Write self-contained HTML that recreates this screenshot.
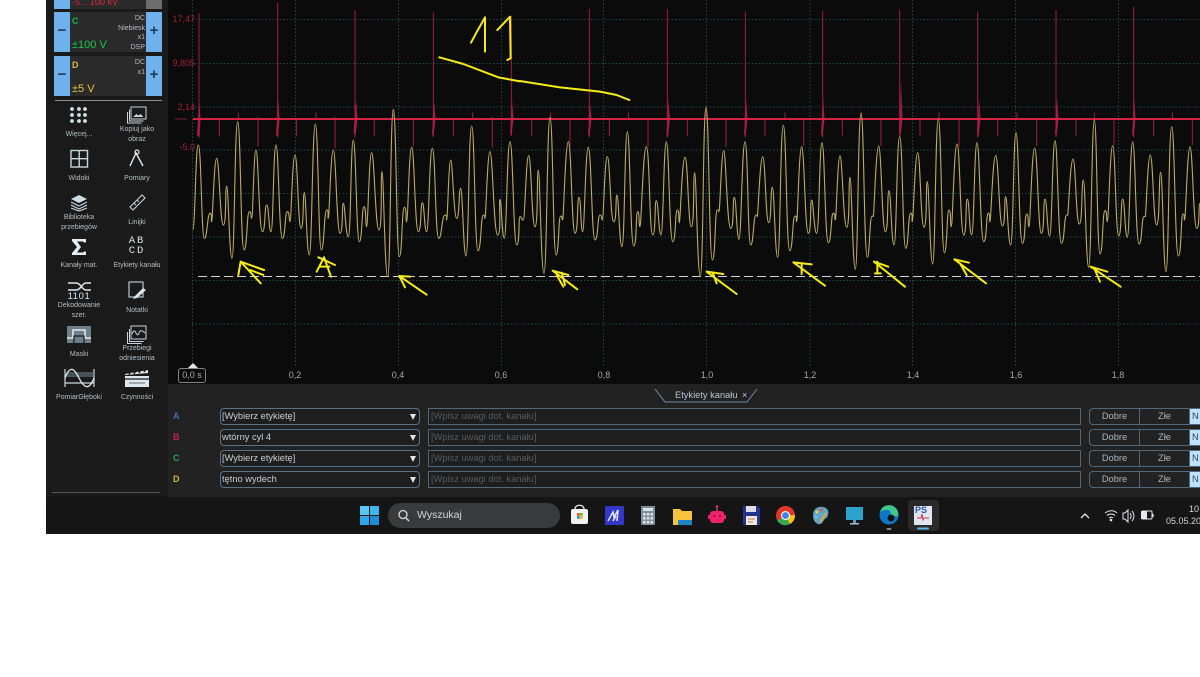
<!DOCTYPE html>
<html lang="pl"><head><meta charset="utf-8"><title>Oscyloskop</title>
<style>
html,body{margin:0;padding:0;background:#fff}
body{width:1200px;height:677px;overflow:hidden;position:relative;font-family:"Liberation Sans",sans-serif;filter:blur(.35px)}
div,span{position:absolute;box-sizing:border-box}
.app{left:46px;top:0;width:1154px;height:534px;overflow:hidden;background:#1a1a1a}
.lb{color:#b4bfc6;font-size:7px;line-height:9.5px;text-align:center;width:60px;white-space:nowrap}
.ax{color:#a9a9a9;font-size:9px;top:370px;width:30px;text-align:center}
.rl{color:#a81c3c;font-size:9px;text-align:right;width:30px;left:165px}
.ch{font-size:9px;font-weight:bold;left:173px}
.sel{left:220px;width:200px;height:17px;border:1px solid #58728a;border-radius:4px;background:#1e1e1e;color:#c9ced2;font-size:9.3px;line-height:15px;padding-left:1px}
.sel i{position:absolute;right:3px;top:5px;border-left:3.5px solid transparent;border-right:3.5px solid transparent;border-top:6px solid #dfe8ee}
.inp{left:428px;width:653px;height:17px;border:1px solid #4f687d;background:#1e1e1e;color:#565a5e;font-size:9.3px;line-height:15px;padding-left:2px}
.grp{left:1089px;width:120px;height:17px;border:1px solid #4f687d;border-radius:4px;background:#222;color:#aab6bf;font-size:9.3px;line-height:15px;overflow:hidden}
.grp span{top:0;height:15px;text-align:center}
.card{background:#2a2a2a;left:54px;width:108px;height:40px;border-radius:3px}
.pm{background:#6fb1ec;top:0;height:40px;width:16px;color:#1e3a56;font-size:15px;font-weight:bold;text-align:center;line-height:38px}
.meta{color:#b8bcc0;font-size:7px;line-height:9.5px;text-align:right;right:17px;top:2px;width:40px}
</style></head><body>
<div class="app"></div>
<div style="left:168px;top:0;width:1032px;height:387px;background:#0b0b0c"></div>
<div style="left:168px;top:384px;width:1032px;height:113px;background:#222"></div>
<div style="left:46px;top:497px;width:1154px;height:37px;background:#151515"></div>

<!-- channel cards -->
<div class="card" style="top:-31px"><div class="pm" style="left:0;background:#6fb1ec"></div><div class="pm" style="right:0;background:#6d6d6d"></div><span style="left:18px;top:28px;color:#e0263c;font-size:9px;white-space:nowrap">-5 .. 100 kV</span></div>
<div class="card" style="top:12px"><div class="pm" style="left:0">−</div><div class="pm" style="right:0">+</div>
<span style="left:18px;top:4px;color:#19b84a;font-size:9px;font-weight:bold">C</span><span style="left:18px;top:27px;color:#18c752;font-size:11px;white-space:nowrap">±100 V</span><div class="meta">DC<br>Niebiesk<br>x1<br>DSP</div></div>
<div class="card" style="top:56px"><div class="pm" style="left:0">−</div><div class="pm" style="right:0">+</div>
<span style="left:18px;top:4px;color:#e0b83c;font-size:9px;font-weight:bold">D</span><span style="left:18px;top:27px;color:#e8c640;font-size:11px;white-space:nowrap">±5 V</span><div class="meta">DC<br>x1</div></div>
<div style="left:55px;top:100px;width:107px;height:1px;background:#8d8d8d"></div>
<div style="left:52px;top:492px;width:108px;height:1px;background:#555"></div>

<!-- sidebar labels -->
<div class="lb" style="left:49px;top:130px">Więcej...</div>
<div class="lb" style="left:107px;top:125px">Kopiuj jako<br>obraz</div>
<div class="lb" style="left:49px;top:174px">Widoki</div>
<div class="lb" style="left:107px;top:174px">Pomiary</div>
<div class="lb" style="left:49px;top:213px">Biblioteka<br>przebiegów</div>
<div class="lb" style="left:107px;top:218px">Linijki</div>
<div class="lb" style="left:49px;top:261px">Kanały mat.</div>
<div class="lb" style="left:107px;top:261px">Etykiety kanału</div>
<div class="lb" style="left:49px;top:301px">Dekodowanie<br>szer.</div>
<div class="lb" style="left:107px;top:306px">Notatki</div>
<div class="lb" style="left:49px;top:350px">Maski</div>
<div class="lb" style="left:107px;top:344px">Przebiegi<br>odniesienia</div>
<div class="lb" style="left:49px;top:393px">PomiarGłęboki</div>
<div class="lb" style="left:107px;top:393px">Czynności</div>

<!-- sidebar icons -->
<svg style="position:absolute;left:46px;top:100px" width="122" height="295" viewBox="46 100 122 295" fill="none">
<g fill="#cfe0ea"><circle cx="72" cy="109" r="1.9"/><circle cx="79" cy="109" r="1.9"/><circle cx="85" cy="109" r="1.9"/><circle cx="72" cy="115" r="1.9"/><circle cx="79" cy="115" r="1.9"/><circle cx="85" cy="115" r="1.9"/><circle cx="72" cy="121" r="1.9"/><circle cx="79" cy="121" r="1.9"/><circle cx="85" cy="121" r="1.9"/></g>
<g stroke="#c6d6e0" stroke-width="1"><rect x="131" y="107" width="15" height="12"/><path d="M129.500 109.500v11.500h14M127.500 112v11h14"/></g>
<path d="M133 117l3.500-3 2 1.500 2-1.500 3 3z" fill="#c6d6e0"/>
<rect x="71" y="150.500" width="16.500" height="16.500" stroke="#c6d6e0" stroke-width="1.4"/><path d="M79.200 150v17M71 158.700h17" stroke="#c6d6e0" stroke-width="1.4"/>
<path d="M130 166l6-13 7 13" stroke="#dfe8ee" stroke-width="1.4"/><circle cx="137" cy="152" r="2" stroke="#dfe8ee" stroke-width="1.200"/>
<path d="M71 199l8-4 8 4-8 4z" fill="#cfdde6"/><path d="M71 202l8 4 8-4M71 205l8 4 8-4M71 208l8 3 8-3" stroke="#c6d6e0" stroke-width="1.200"/>
<path d="M130 207l12-12 3 3-12 12z" stroke="#c6d6e0" stroke-width="1.100"/><path d="M134 203l2 2M137 200l2 2" stroke="#c6d6e0"/>
<path d="M72 239h14v3.500h-2l-1-1h-6l4 5.500-4 5.500h6l1-1h2v3.500H72v-2l5-6-5-6z" fill="#e2ecf2"/>
<path d="M68 283h8c5 0 6 7 10 7h5M68 290h8c5 0 6-7 10-7h5" stroke="#dbe6ed" stroke-width="1.500"/>
<rect x="129" y="282" width="14" height="15" stroke="#c6d6e0" stroke-width="1.100"/><path d="M134 297l9-9 3 2-9 8-4 1z" fill="#dbe6ed"/>
<rect x="67" y="326" width="24" height="17" fill="#6f7f89"/><path d="M67 338h6v-8h12v8h6" stroke="#e0e8ee" stroke-width="1.600"/><path d="M74 343v-7h10v7" stroke="#1a1a1a" stroke-width="1.200"/>
<g stroke="#c6d6e0" stroke-width="1"><rect x="131" y="326" width="15" height="13"/><path d="M129.500 329v12.500h14M127.500 332v11.500h14"/><path d="M132 334c2-5 3-3 4-1s2 3 3 0 3-3 6 0"/></g>
<path d="M65 369v18M94 369v18M65 383h29" stroke="#c6d6e0" stroke-width="1.200"/><path d="M66 372h27v5H66z" fill="#6f7f89" opacity=".55"/><path d="M65 378c5-13 9-10 14 0s10 13 15 0" stroke="#e3edf3" stroke-width="1.300"/>
<rect x="125" y="376" width="24" height="11" fill="#dfe8ee"/><path d="M125 374l23-4v3l-23 2zM125 371l23-1.500" fill="#dfe8ee"/><path d="M129 374.500l2-4M134 374l2-4M139 373l2-4M144 372l2-3" stroke="#1a1a1a" stroke-width="1.500"/><path d="M125 379h24" stroke="#1a1a1a" stroke-width="1.200"/><path d="M129 383h16" stroke="#6f7f89" stroke-width="1.200"/>
</svg>
<span style="left:66px;top:291px;color:#dbe6ed;font-size:9.500px;width:26px;text-align:center;letter-spacing:.6px">1101</span>
<span style="left:127px;top:237px;color:#d8e3ea;font-size:10.5px;line-height:9.500px;font-family:'Liberation Mono',monospace;letter-spacing:2px;width:20px;text-align:center;white-space:normal">AB<br>CD</span>

<!-- scope -->
<svg style="position:absolute;left:0;top:0" width="1200" height="384" viewBox="0 0 1200 384" fill="none">
<g stroke="#1e4a4a" stroke-width="1" stroke-dasharray="1.500 2">
<path d="M192 19.500H1200M192 63.500H1200M192 107H1200M192 150H1200M192 193.500H1200M192 237H1200M192 280.500H1200M192 324H1200"/>
<path d="M192.500 0V366M295.500 0V366M398.500 0V366M501.500 0V366M603.500 0V366M706.500 0V366M810 0V366M912.500 0V366M1015.500 0V366M1118.500 0V366"/>
</g>
<path d="M198 276.500H1200" stroke="#d2d2d2" stroke-width="1" stroke-dasharray="9 4"/>
<path d="M175 119h12" stroke="#7c1c30" stroke-width="1"/>

<!-- red spikes -->
<g stroke="#a01c40" stroke-width="3" transform="translate(170,0) scale(.33333)">
<path d="M87 40V412M323 8V412M555 30V412M790 38V412M1024 48V408"/>
<path d="M148 355V410M205 337V355M264 350V440M380 355V408M438 337V355M495 350V445M613 355V408M670 328V355M730 355V440M850 355V410M908 337V355M967 350V443"/>
</g>
<g stroke="#a01c40" stroke-width="3" transform="translate(520,0) scale(.33333)">
<path d="M208 27V412M442 27V412M676 35V412M908 32V412"/>
<path d="M35 355V408M92 337V355M150 355V440M268 355V408M325 337V355M384 355V440M502 355V408M558 322V355M618 355V442M735 355V410M795 337V355M851 355V438M967 355V406M1025 337V355"/>
</g>
<g stroke="#a01c40" stroke-width="3" transform="translate(860,0) scale(.33333)">
<path d="M119 30V410M353 35V412M588 30V412M821 20V412"/>
<path d="M63 355V438M180 355V408M237 337V355M297 355V440M413 355V408M471 337V355M530 355V438M648 355V408M703 337V355M762 355V435M881 355V408M937 337V355M997 355V435"/>
</g>
<g fill="#a51d42">
<path d="M199 95l1.500 24-1 19-2.500-3 1-16zM278 95l1.500 24-1.500 19-2-3 1-16zM279 95zM278 95zM278 95zM356 100l1.500 19-2 17-2-3 1-14zM434 100l1.500 19-2 18-1.500-3 1-15zM512 100l1.500 19-2 17-1.500-3 1-14zM590 103l1.500 16-2 18-1.500-3 1-15zM668 98l2 21-2 18-1.500-3 1-15zM746 98l1.500 21-2 18-1.500-3 1-15zM823 95l1.500 24-2 18-1.500-3 1-15zM901 80l1.500 39-2 17-1.500-3 1-14zM979 98l1.500 21-2 18-1.500-3 1-15zM1057 98l1.500 21-2 18-1.500-3 1-15zM1134 95l1.500 24-2 18-1.500-3 1-15z"/>
</g>
<path d="M193 119H1200" stroke="#d62249" stroke-width="2"/>

<!-- yellow trace -->
<g stroke="#bdab66" stroke-width="3.300" stroke-linejoin="round" fill="none">
<path transform="translate(170,0) scale(.33333)" d="M68 690C76 690 76 435 85 435S94 715 103 715S112 640 120 640S122 665 125 665S132 475 140 475S150 675 160 675S165 558 170 558S178 775 186 775S194 365 203 365S212 750 222 750S230 635 238 635S241 655 245 655S251 450 258 450S267 695 277 695S283 615 290 615S296 695 303 695S310 435 318 435S327 715 337 715S344 635 352 635S356 665 360 665S367 465 375 465S384 685 393 685S398 578 403 578S410 765 418 765S427 372 436 372S445 750 454 750S462 630 470 630S472 655 475 655S482 450 490 450S500 700 510 700S515 610 520 610S527 710 535 710S542 420 550 420S559 725 568 725S575 620 582 620S586 680 590 680S597 458 605 458S616 690 627 690S631 515 636 515S644 830 653 830S661 328 670 328S679 770 688 770S695 622 703 622S706 665 710 665S717 442 725 442S735 695 745 695S751 608 757 608S763 695 770 695S778 445 787 445S796 715 806 715S815 645 825 645S827 660 830 660S836 480 842 480S851 655 860 655S866 565 872 565S880 768 888 768S896 378 905 378S914 752 924 752S932 645 940 645S942 655 945 655S952 455 960 455S971 705 983 705S986 598 990 598S996 715 1003 715S1011 425 1020 425S1030 735 1040 735S1045 650 1050 650"/>
<path transform="translate(520,0) scale(.33333)" d="M0 650C5 650 5 660 10 660S18 467 26 467S35 680 45 680S50 510 55 510S63 820 72 820S81 352 90 352S99 765 108 765S115 648 122 648S125 660 128 660S136 425 145 425S155 700 165 700S171 592 177 592S182 695 188 695S196 442 205 442S215 720 225 720S232 645 240 645S243 660 247 660S254 470 262 470S271 665 281 665S286 585 291 585S298 740 306 740S314 395 322 395S331 738 341 738S347 635 353 635S356 680 360 680S369 440 379 440S388 705 398 705S403 602 409 602S416 705 423 705S431 425 439 425S448 725 458 725S465 630 472 630S475 668 478 668S486 472 495 472S504 680 514 680S519 518 524 518S532 830 541 830S549 322 558 322S567 780 577 780S584 630 592 630S594 635 597 635S604 452 611 452S621 685 632 685S637 592 643 592S650 718 657 718S666 425 675 425S683 735 692 735S700 645 708 645S710 650 712 650S720 470 728 470S737 668 746 668S751 562 757 562S765 772 773 772S781 375 790 375S799 752 809 752S817 648 825 648S827 665 830 665S837 440 845 440S855 700 865 700S870 600 875 600S882 700 890 700S898 428 906 428S915 728 925 728S932 640 940 640S943 660 946 660S953 467 960 467S970 682 980 682S985 532 990 532S998 808 1006 808S1014 340 1023 340S1032 772 1042 772"/>
<path transform="translate(860,0) scale(.33333)" d="M22 772C29 772 29 648 36 648S38 650 40 650S48 438 56 438S66 695 76 695S81 572 87 572S94 735 102 735S110 410 119 410S128 745 137 745S144 640 152 640S154 665 157 665S165 458 173 458S182 682 192 682S197 545 202 545S210 792 218 792S226 358 235 358S244 758 253 758S260 630 267 630S270 680 274 680S282 432 291 432S301 705 311 705S316 597 322 597S328 705 335 705S343 428 351 428S361 725 371 725S378 640 385 640S387 665 390 665S398 467 407 467S417 678 427 678S432 590 437 590S444 735 452 735S460 398 468 398S477 730 487 730S493 642 500 642S503 680 507 680S515 445 524 445S534 700 544 700S549 597 555 597S562 708 569 708S577 422 585 422S594 730 604 730S612 645 620 645S621 645 623 645S631 477 639 477S648 672 658 672S664 540 670 540S678 802 686 802S695 360 703 360S711 762 720 762S727 632 735 632S738 665 742 665S750 437 758 437S767 708 776 708S782 597 788 597S795 712 802 712S810 425 818 425S827 732 837 732S844 650 852 650S854 650 856 650S863 465 871 465S880 675 890 675S896 517 902 517S910 815 918 815S926 380 935 380S945 768 955 768S962 642 969 642S971 660 974 660S982 440 990 440S1000 685 1010 685S1015 610 1020 610"/>
</g>

<!-- yellow annotations -->
<g stroke="#f4ec14" stroke-width="6" stroke-linecap="round" stroke-linejoin="round" fill="none" transform="translate(170,0) scale(.33333)">
<path d="M903 128L918 100 945 52 945 155M982 90L1020 50 1022 175 1012 180"/>
<path d="M808 172L880 192 985 232 1050 244"/>
<path d="M212 785L272 850M212 785L205 825M212 785L282 810M240 810L280 825"/>
<path d="M445 772L495 795M462 772L440 815M462 772L483 830M450 800L478 800"/>
<path d="M688 828L770 884M688 828L720 830M688 828L705 862"/>
</g>
<g stroke="#f4ec14" stroke-width="6" stroke-linecap="round" stroke-linejoin="round" fill="none" transform="translate(520,0) scale(.33333)">
<path d="M0 243L120 262 240 275 290 285 328 300"/>
<path d="M98 812L172 868M98 812L145 825M110 825L130 860M125 818L135 855"/>
<path d="M560 815L650 882M560 815L610 822M578 818L590 850"/>
<path d="M820 787L915 857M820 787L875 793M845 793L845 822"/>
</g>
<g stroke="#f4ec14" stroke-width="6" stroke-linecap="round" stroke-linejoin="round" fill="none" transform="translate(860,0) scale(.33333)">
<path d="M42 785L135 860M42 785L85 800M52 785L52 820M45 820L62 820"/>
<path d="M283 778L378 850M283 778L327 788M300 790L320 825"/>
<path d="M692 800L782 860M692 800L742 815M705 810L720 845"/>
</g>
</svg>

<div class="rl" style="top:14px">17,47</div>
<div class="rl" style="top:58px">9,805</div>
<div class="rl" style="top:102px">2,14</div>
<div class="rl" style="top:142px">-5,0</div>

<!-- axis -->
<div style="left:178px;top:368px;width:28px;height:15px;border:1px solid #7d8790;border-radius:3px;color:#a9a9a9;font-size:9px;line-height:13px;text-align:center">0,0 s</div>
<div style="left:188px;top:363px;width:0;height:0;border-left:5px solid transparent;border-right:5px solid transparent;border-bottom:5px solid #dfe8ee"></div>
<div class="ax" style="left:280px">0,2</div><div class="ax" style="left:383px">0,4</div><div class="ax" style="left:486px">0,6</div><div class="ax" style="left:589px">0,8</div><div class="ax" style="left:692px">1,0</div><div class="ax" style="left:795px">1,2</div><div class="ax" style="left:898px">1,4</div><div class="ax" style="left:1001px">1,6</div><div class="ax" style="left:1103px">1,8</div>

<!-- tab -->
<svg style="position:absolute;left:640px;top:384px" width="130" height="22" fill="none"><path d="M15 5l10 13h82l10-13" stroke="#6f8ba5"/></svg>
<span style="left:675px;top:390px;color:#b8c4cc;font-size:9.3px;white-space:nowrap">Etykiety kanału</span><span style="left:742px;top:390px;color:#c8d0d6;font-size:9px">×</span>

<!-- rows -->
<span class="ch" style="top:411px;color:#3f6fb0">A</span>
<span class="ch" style="top:432px;color:#c9234a">B</span>
<span class="ch" style="top:453px;color:#1ba84a">C</span>
<span class="ch" style="top:474px;color:#d8b23c">D</span>
<div class="sel" style="top:408px">[Wybierz etykietę]<i></i></div>
<div class="sel" style="top:429px">wtórny cyl 4<i></i></div>
<div class="sel" style="top:450px">[Wybierz etykietę]<i></i></div>
<div class="sel" style="top:471px">tętno wydech<i></i></div>
<div class="inp" style="top:408px">[Wpisz uwagi dot. kanału]</div>
<div class="inp" style="top:429px">[Wpisz uwagi dot. kanału]</div>
<div class="inp" style="top:450px">[Wpisz uwagi dot. kanału]</div>
<div class="inp" style="top:471px">[Wpisz uwagi dot. kanału]</div>
<div class="grp" style="top:408px"><span style="left:0;width:50px;border-right:1px solid #4f687d">Dobre</span><span style="left:50px;width:50px;border-right:1px solid #4f687d">Złe</span><span style="left:100px;width:20px;background:#bfe2fb;color:#33485a;text-align:left;padding-left:2px">N</span></div>
<div class="grp" style="top:429px"><span style="left:0;width:50px;border-right:1px solid #4f687d">Dobre</span><span style="left:50px;width:50px;border-right:1px solid #4f687d">Złe</span><span style="left:100px;width:20px;background:#bfe2fb;color:#33485a;text-align:left;padding-left:2px">N</span></div>
<div class="grp" style="top:450px"><span style="left:0;width:50px;border-right:1px solid #4f687d">Dobre</span><span style="left:50px;width:50px;border-right:1px solid #4f687d">Złe</span><span style="left:100px;width:20px;background:#bfe2fb;color:#33485a;text-align:left;padding-left:2px">N</span></div>
<div class="grp" style="top:471px"><span style="left:0;width:50px;border-right:1px solid #4f687d">Dobre</span><span style="left:50px;width:50px;border-right:1px solid #4f687d">Złe</span><span style="left:100px;width:20px;background:#bfe2fb;color:#33485a;text-align:left;padding-left:2px">N</span></div>

<!-- taskbar -->
<div style="left:388px;top:503px;width:172px;height:25px;border-radius:13px;background:#383a3c"></div>
<span style="left:417px;top:509px;color:#d4d6d8;font-size:10.500px">Wyszukaj</span>
<div style="left:908px;top:500px;width:31px;height:31px;background:#2a2a2a;border-radius:4px"></div>
<svg style="position:absolute;left:350px;top:497px" width="600" height="37" viewBox="350 497 600 37" fill="none">
<g fill="#3fb6f0"><rect x="360" y="506" width="9" height="9" fill="#58c8f6"/><rect x="370" y="506" width="9" height="9" fill="#3fb6f0"/><rect x="360" y="516" width="9" height="9" fill="#2fa6e8"/><rect x="370" y="516" width="9" height="9" fill="#1c8fd8"/></g>
<circle cx="403" cy="514.500" r="4" stroke="#d8dadc" stroke-width="1.300"/><path d="M406 518l3 3" stroke="#d8dadc" stroke-width="1.500"/>
<!-- store -->
<rect x="571" y="509" width="17" height="15" rx="2" fill="#f2f2f0"/><path d="M575 509c0-5 9-5 9 0" stroke="#dfe3e6" stroke-width="1.300"/><rect x="577" y="513" width="2.800" height="2.800" fill="#e8502a"/><rect x="580" y="513" width="2.800" height="2.800" fill="#7dbb30"/><rect x="577" y="516" width="2.800" height="2.800" fill="#2a9be8"/><rect x="580" y="516" width="2.800" height="2.800" fill="#f5b820"/>
<!-- app -->
<rect x="605" y="506" width="19" height="19" rx="1" fill="#3438c8"/><path d="M608 521l5-9 1 5 4-7-1 11M613 521l3-5" stroke="#dfe8ff" stroke-width="1.500"/>
<!-- calc -->
<rect x="641" y="506" width="14" height="19" rx="1" fill="#7e8f9a"/><rect x="643" y="508" width="10" height="3" fill="#d6e4ea"/><g fill="#dbe6ea"><rect x="643" y="513" width="2.500" height="2.500"/><rect x="646.800" y="513" width="2.500" height="2.500"/><rect x="650.500" y="513" width="2.500" height="2.500"/><rect x="643" y="517" width="2.500" height="2.500"/><rect x="646.800" y="517" width="2.500" height="2.500"/><rect x="650.500" y="517" width="2.500" height="2.500"/><rect x="643" y="521" width="2.500" height="2.500"/><rect x="646.800" y="521" width="2.500" height="2.500"/><rect x="650.500" y="521" width="2.500" height="2.500"/></g>
<!-- folder -->
<path d="M673 509h7l2 2h10v14h-19z" fill="#f7c23c"/><rect x="678" y="520" width="14" height="5" fill="#1f86c6"/>
<!-- robot -->
<rect x="710" y="511" width="14" height="12" rx="3" fill="#f0226e"/><path d="M717 511v-4" stroke="#e03a6a" stroke-width="1.300"/><circle cx="717" cy="506.500" r="1.300" fill="#e03a6a"/><rect x="708" y="515" width="2.500" height="4" fill="#f0226e"/><rect x="723.500" y="515" width="2.500" height="4" fill="#f0226e"/><circle cx="714" cy="516" r="1" fill="#7a0f36"/><circle cx="720" cy="516" r="1" fill="#7a0f36"/>
<!-- floppy -->
<path d="M743 506h14l3 2v17h-17z" fill="#22358e"/><rect x="746" y="506" width="10" height="6" fill="#d9dee8"/><rect x="746" y="516" width="11" height="9" fill="#f2e6e0"/><path d="M748 519h7M748 522h5" stroke="#c07a50"/>
<!-- chrome -->
<circle cx="785.500" cy="515.500" r="9.500" fill="#e0392c"/><path d="M785.500 515.500L777 520.500A9.500 9.500 0 0 0 790 524z" fill="#3aa655"/><path d="M785.500 515.500L795 515A9.500 9.500 0 0 1 790 524z" fill="#f5c518"/><circle cx="785.500" cy="515.500" r="4.500" fill="#fff"/><circle cx="785.500" cy="515.500" r="3.400" fill="#3b82e6"/>
<!-- paint -->
<path d="M813 515c0-6 5-9 10-8s6 4 5 8-3 3-4 5-3 5-6 4-5-4-5-9z" fill="#5fa7c8"/><circle cx="817" cy="512" r="1.500" fill="#e8d04a"/><circle cx="821" cy="510" r="1.500" fill="#e85a3a"/><circle cx="816" cy="517" r="1.500" fill="#6ac0e0"/><path d="M820 522l6-9" stroke="#e8a040" stroke-width="2"/>
<!-- monitor -->
<rect x="846" y="507" width="17" height="13" fill="#2aa4cc"/><rect x="853" y="520" width="3" height="3" fill="#5ea0b8"/><rect x="850" y="523" width="9" height="1.500" fill="#a8c0cc"/>
<!-- edge -->
<circle cx="889" cy="515" r="9.500" fill="#0e78c8"/><path d="M880 512c2-7 9-8 13-6s6 6 5 10h-9c3-3 2-5-1-6-3 0-6 0-8 2z" fill="#3ec98a"/><circle cx="891" cy="518" r="3.500" fill="#151515"/><rect x="886.500" y="528" width="5" height="2" rx="1" fill="#8a8a8a"/>
<!-- PS -->
<rect x="914" y="506" width="18" height="19" fill="#dfe8f0"/><path d="M917 518h4l1-4 1 6 1-2h5" stroke="#d0304a"/><rect x="917" y="527.500" width="12" height="2" rx="1" fill="#62b8ec"/>
</svg>
<span style="left:915px;top:505px;color:#2c56a8;font-size:9px;font-weight:bold;white-space:nowrap">PS</span>

<!-- tray -->
<svg style="position:absolute;left:1075px;top:505px" width="85" height="20" fill="none" stroke="#e6e8ea">
<path d="M6 13l4-4 4 4" stroke-width="1.300"/>
<path d="M30 8c4-3 9-3 12 0M32 10.500c2-2 6-2 8 0M34 13c1-1 3-1 4 0" stroke-width="1"/><circle cx="36" cy="15" r=".8" fill="#e6e8ea"/>
<path d="M48 8h2l3-3v12l-3-3h-2zM55 8c1.500 2 1.500 4 0 6M57 6c2.500 3 2.500 7 0 10" stroke-width="1"/>
<rect x="67" y="6" width="10" height="8" rx="1" stroke-width="1"/><path d="M78 9v3" stroke-width="1.300"/><path d="M66 6h6v8h-6z" fill="#e6e8ea" stroke="none"/>
</svg>
<span style="left:1189px;top:504px;color:#d8dadc;font-size:9px">10</span>
<span style="left:1166px;top:516px;color:#cfd2d4;font-size:9px;white-space:nowrap">05.05.20</span>
</body></html>
